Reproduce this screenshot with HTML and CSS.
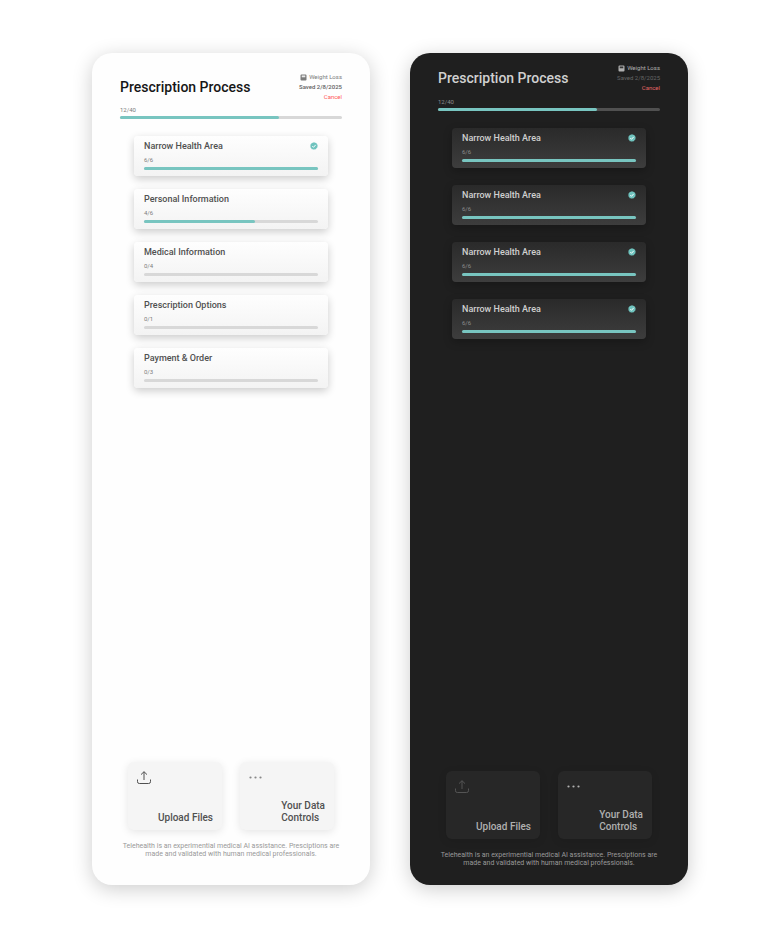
FILE: index.html
```html
<!DOCTYPE html>
<html lang="en">
  <head>
    <meta charset="UTF-8" />
    <title>Prescription Process</title>
    <link rel="stylesheet" href="styles.css">
  </head>
  <body>
    <svg class="sprite" aria-hidden="true">
      <symbol id="scale" viewBox="0 0 14 14">
        <path fill-rule="evenodd" d="M3 1h8a2 2 0 0 1 2 2v8a2 2 0 0 1-2 2H3a2 2 0 0 1-2-2V3a2 2 0 0 1 2-2zM3.500 3v3.500h7V3z" fill="currentColor" />
        <path d="M3.500 3h7v3.500h-7z" fill="currentColor" opacity="0.15" />
      </symbol>
      <symbol id="check" viewBox="0 0 14 14">
        <path d="M7 .4l1.900 1 2.100.2 1 1.900 1.400 1.600-.4 2.100.2 2.100-1.700 1.300-1.100 1.900-2.100.2L7 13.600l-1.800-.9-2.100-.2-1.100-1.900L.6 9l.3-2.100L.6 4.900 2 3.500l1-1.900 2.100-.2z" fill="#6fc3be" />
        <path d="M4 7.200l2.100 2.100L10 5" fill="none" stroke="#fff" stroke-width="1.700" />
      </symbol>
      <symbol id="upload" viewBox="0 0 14 13">
        <path d="M.5 8.500v2.200a1.800 1.800 0 0 0 1.800 1.800h9.400a1.800 1.800 0 0 0 1.800-1.800V8.500M7 9V.8M4 3.600L7 .7l3 2.900" fill="none" stroke="currentColor" />
      </symbol>
      <symbol id="dots" viewBox="0 0 14 13">
        <circle cx="1.500" cy="6.500" r="1.100" fill="currentColor" />
        <circle cx="6.500" cy="6.500" r="1.100" fill="currentColor" />
        <circle cx="11.500" cy="6.500" r="1.100" fill="currentColor" />
      </symbol>
    </svg>

    <main class="screens">
      <section class="panel">
        <header class="header">
          <h1>Prescription Process</h1>
          <div class="meta">
            <span class="topic"><svg class="scaleIcon"><use href="#scale" /></svg>Weight Loss</span>
            <span class="saved">Saved 2/8/2025</span>
            <button type="button" class="cancel">Cancel</button>
          </div>
        </header>
        <div class="overall">
          <span class="count">12/40</span>
          <div class="bar"><div class="fill" style="width: 71.5%"></div></div>
        </div>

        <ul class="steps">
          <li class="card">
            <h2>Narrow Health Area <svg class="checkIcon"><use href="#check" /></svg></h2>
            <span class="count">6/6</span>
            <div class="bar"><div class="fill" style="width: 100%"></div></div>
          </li>
          <li class="card">
            <h2>Personal Information</h2>
            <span class="count">4/6</span>
            <div class="bar"><div class="fill" style="width: 64%"></div></div>
          </li>
          <li class="card">
            <h2>Medical Information</h2>
            <span class="count">0/4</span>
            <div class="bar"></div>
          </li>
          <li class="card">
            <h2>Prescription Options</h2>
            <span class="count">0/1</span>
            <div class="bar"></div>
          </li>
          <li class="card">
            <h2>Payment &amp; Order</h2>
            <span class="count">0/3</span>
            <div class="bar"></div>
          </li>
        </ul>

        <div class="tiles">
          <button type="button" class="tile">
            <svg class="tileIcon upload"><use href="#upload" /></svg>
            <span>Upload Files</span>
          </button>
          <button type="button" class="tile">
            <svg class="tileIcon dots"><use href="#dots" /></svg>
            <span>Your Data<br>Controls</span>
          </button>
        </div>
        <p class="note">Telehealth is an experimential medical AI assistance. Presciptions are made and validated with human medical professionals.</p>
      </section>

      <section class="panel dark">
        <header class="header">
          <h1>Prescription Process</h1>
          <div class="meta">
            <span class="topic"><svg class="scaleIcon"><use href="#scale" /></svg>Weight Loss</span>
            <span class="saved">Saved 2/8/2025</span>
            <button type="button" class="cancel">Cancel</button>
          </div>
        </header>
        <div class="overall">
          <span class="count">12/40</span>
          <div class="bar"><div class="fill" style="width: 71.5%"></div></div>
        </div>

        <ul class="steps">
          <li class="card">
            <h2>Narrow Health Area <svg class="checkIcon"><use href="#check" /></svg></h2>
            <span class="count">6/6</span>
            <div class="bar"><div class="fill" style="width: 100%"></div></div>
          </li>
          <li class="card">
            <h2>Narrow Health Area <svg class="checkIcon"><use href="#check" /></svg></h2>
            <span class="count">6/6</span>
            <div class="bar"><div class="fill" style="width: 100%"></div></div>
          </li>
          <li class="card">
            <h2>Narrow Health Area <svg class="checkIcon"><use href="#check" /></svg></h2>
            <span class="count">6/6</span>
            <div class="bar"><div class="fill" style="width: 100%"></div></div>
          </li>
          <li class="card">
            <h2>Narrow Health Area <svg class="checkIcon"><use href="#check" /></svg></h2>
            <span class="count">6/6</span>
            <div class="bar"><div class="fill" style="width: 100%"></div></div>
          </li>
        </ul>

        <div class="tiles">
          <button type="button" class="tile">
            <svg class="tileIcon upload"><use href="#upload" /></svg>
            <span>Upload Files</span>
          </button>
          <button type="button" class="tile">
            <svg class="tileIcon dots"><use href="#dots" /></svg>
            <span>Your Data<br>Controls</span>
          </button>
        </div>
        <p class="note">Telehealth is an experimential medical AI assistance. Presciptions are made and validated with human medical professionals.</p>
      </section>
    </main>
  </body>
</html>
```
FILE: styles.css
```css
* {
  box-sizing: border-box;
}

body {
  margin: 0;
  background: #fff;
  font-family: Roboto, Arial, sans-serif;
}

h1,
h2,
p,
ul {
  margin: 0;
  padding: 0;
}

button {
  border: 0;
  padding: 0;
  background: none;
  font-family: inherit;
  cursor: pointer;
}

.sprite {
  display: none;
}

.screens {
  display: grid;
  grid-template-columns: 1fr 1fr;
  gap: 40px;
  min-height: 100vh;
  padding: 53px 84px 46px 92px;
}

.panel {
  --title: #161616;
  --heading: #505050;
  --muted: #7c7c7c;
  --saved: #606060;
  --track: #d8d8d8;
  display: flex;
  flex-direction: column;
  padding: 19px 28px 27px;
  border-radius: 20px;
  background: #fefefe;
  box-shadow: 0 4px 20px rgba(0, 0, 0, 0.2);
}

/* header */
.header {
  display: flex;
  justify-content: space-between;
  align-items: center;
}

h1 {
  font-size: 14px;
  line-height: 18px;
  font-weight: 500;
  color: var(--title);
}

.meta {
  display: flex;
  flex-direction: column;
  align-items: flex-end;
  font-size: 6px;
  line-height: 10px;
  color: var(--muted);
}

.topic {
  display: flex;
  align-items: center;
  gap: 2px;
}

.scaleIcon {
  width: 7px;
  height: 7px;
}

.saved {
  font-weight: 500;
  color: var(--saved);
}

.cancel {
  font-size: 6px;
  line-height: 10px;
  color: #ff5a5a;
}

/* progress */
.overall {
  margin-top: 4px;
}

.count {
  display: block;
  font-size: 6px;
  line-height: 8px;
  color: var(--muted);
}

.bar {
  height: 3px;
  margin-top: 2px;
  border-radius: 2px;
  background: var(--track);
}

.fill {
  height: 100%;
  border-radius: 2px;
  background: #78c5c0;
}

/* steps */
.steps {
  display: flex;
  flex-direction: column;
  gap: 13px;
  margin: 17px 14px;
  list-style: none;
}

.card {
  padding: 4px 10px 6px;
  border-radius: 4px;
  background: linear-gradient(#fefefe, #f3f3f3);
  box-shadow: 0 3px 8px rgba(0, 0, 0, 0.2);
}

.card .count {
  margin-top: 4px;
}

.card .bar {
  margin-top: 3px;
}

h2 {
  display: flex;
  justify-content: space-between;
  align-items: center;
  font-size: 9px;
  line-height: 12px;
  font-weight: 500;
  color: var(--heading);
}

.checkIcon {
  width: 8px;
  height: 8px;
}

/* bottom tiles */
.tiles {
  display: grid;
  grid-template-columns: 1fr 1fr;
  gap: 18px;
  margin: auto 8px 0;
}

.tile {
  display: flex;
  flex-direction: column;
  justify-content: space-between;
  height: 68px;
  padding: 9px 9px 6px;
  border-radius: 6px;
  background: #f5f5f5;
  box-shadow: 0 2px 8px rgba(0, 0, 0, 0.1);
  font-size: 10px;
  line-height: 12px;
  font-weight: 500;
  text-align: left;
  color: var(--heading);
}

.tile span {
  align-self: flex-end;
}

.tileIcon {
  width: 14px;
  height: 13px;
}

.dots {
  color: #888;
}

.note {
  margin-top: 12px;
  font-size: 7px;
  line-height: 8px;
  text-align: center;
  color: #999;
}

/* dark theme */
.dark {
  --title: #d0d0d0;
  --heading: #d0d0d0;
  --muted: #8c8c8c;
  --saved: #666;
  --track: #505050;
  padding-top: 10px;
  padding-bottom: 18px;
  background: #1f1f1f;
}

.dark .topic {
  color: #b0b0b0;
}

.dark .saved {
  font-weight: 400;
}

.dark .cancel {
  color: #e06464;
}

.dark .overall {
  margin-top: 5px;
}

.dark .steps {
  gap: 17px;
}

.dark .card {
  background: linear-gradient(#2a2a2a, #3d3d3d);
  box-shadow: 0 3px 8px rgba(0, 0, 0, 0.25);
}

.dark .tile {
  background: #272727;
  color: #b0b0b0;
}

.dark .upload {
  color: #555;
}

.dark .dots {
  color: #b0b0b0;
}
```
